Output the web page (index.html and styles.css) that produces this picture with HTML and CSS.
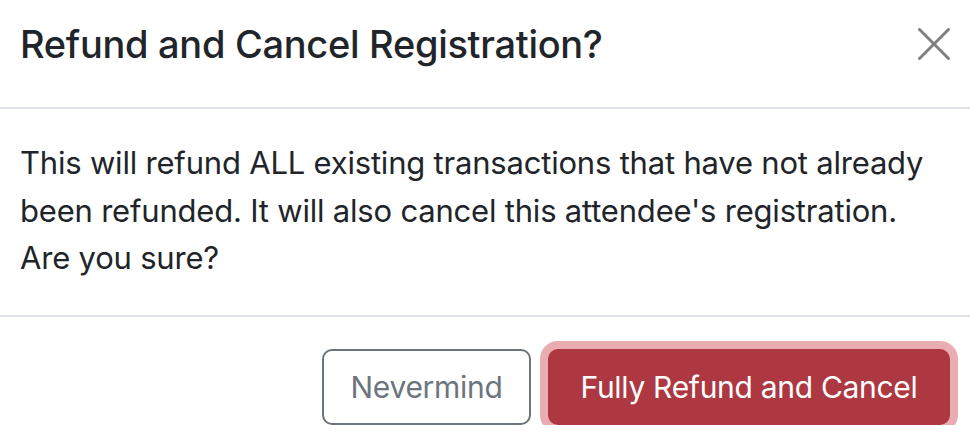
FILE: index.html
```html
<!DOCTYPE html>
<html lang="en">
<head>
<meta charset="utf-8">
<title>Refund and Cancel Registration?</title>
<link rel="stylesheet" href="styles.css">
</head>
<body>
<div class="modal">
  <div class="modal-header">
    <h5 class="modal-title">Refund and Cancel Registration?</h5>
    <button class="btn-close" type="button" aria-label="Close">
      <svg viewBox="0 0 32 32" width="32" height="32"><path d="M1.5 1.5 L30.5 30.5 M30.5 1.5 L1.5 30.5" stroke="#808080" stroke-width="3" stroke-linecap="round" fill="none"/></svg>
    </button>
  </div>
  <div class="modal-body">
    This will refund ALL existing transactions that have not already been refunded. It will also cancel this attendee's registration. Are you sure?
  </div>
  <div class="modal-footer">
    <button class="btn btn-outline" type="button">Nevermind</button>
    <button class="btn btn-danger" type="button">Fully Refund and Cancel</button>
  </div>
</div>
</body>
</html>
```
FILE: styles.css
```css
html, body {
  margin: 0;
  padding: 0;
  background: #ffffff;
}
body {
  font-family: Inter, "Liberation Sans", sans-serif;
  color: #212529;
}
.modal {
  width: 970px;
}
.modal-header {
  display: flex;
  align-items: flex-start;
  justify-content: space-between;
  padding: 20px 20px 0 20px;
  height: 87px;
  border-bottom: 2px solid #dee2e6;
}
.modal-title {
  margin: 0;
  font-size: 38px;
  font-weight: 500;
  line-height: 48px;
  letter-spacing: -0.3px;
}
.btn-close {
  border: 0;
  background: transparent;
  padding: 0;
  margin-top: 8px;
  width: 32px;
  height: 32px;
  cursor: pointer;
}
.btn-close svg {
  display: block;
}
.modal-body {
  padding: 30px 20px 33px 20px;
  font-size: 31px;
  line-height: 47.5px;
  letter-spacing: -0.2px;
}
.modal-footer {
  display: flex;
  justify-content: flex-end;
  gap: 17px;
  padding: 32px 20px 0 20px;
  border-top: 2px solid #dee2e6;
}
.btn {
  font-family: inherit;
  font-size: 30px;
  line-height: 48px;
  height: 76px;
  padding: 0;
  text-align: center;
  white-space: nowrap;
  border-radius: 10px;
  border: 2px solid transparent;
  cursor: pointer;
  letter-spacing: -0.3px;
}
.btn-outline {
  background: #ffffff;
  color: #6c757d;
  border-color: #6c757d;
  width: 209px;
}
.btn-danger {
  background: #ad3841;
  border-color: #ad3841;
  color: #ffffff;
  width: 402px;
  box-shadow: 0 0 0 8px #e9adb1;
}
```
